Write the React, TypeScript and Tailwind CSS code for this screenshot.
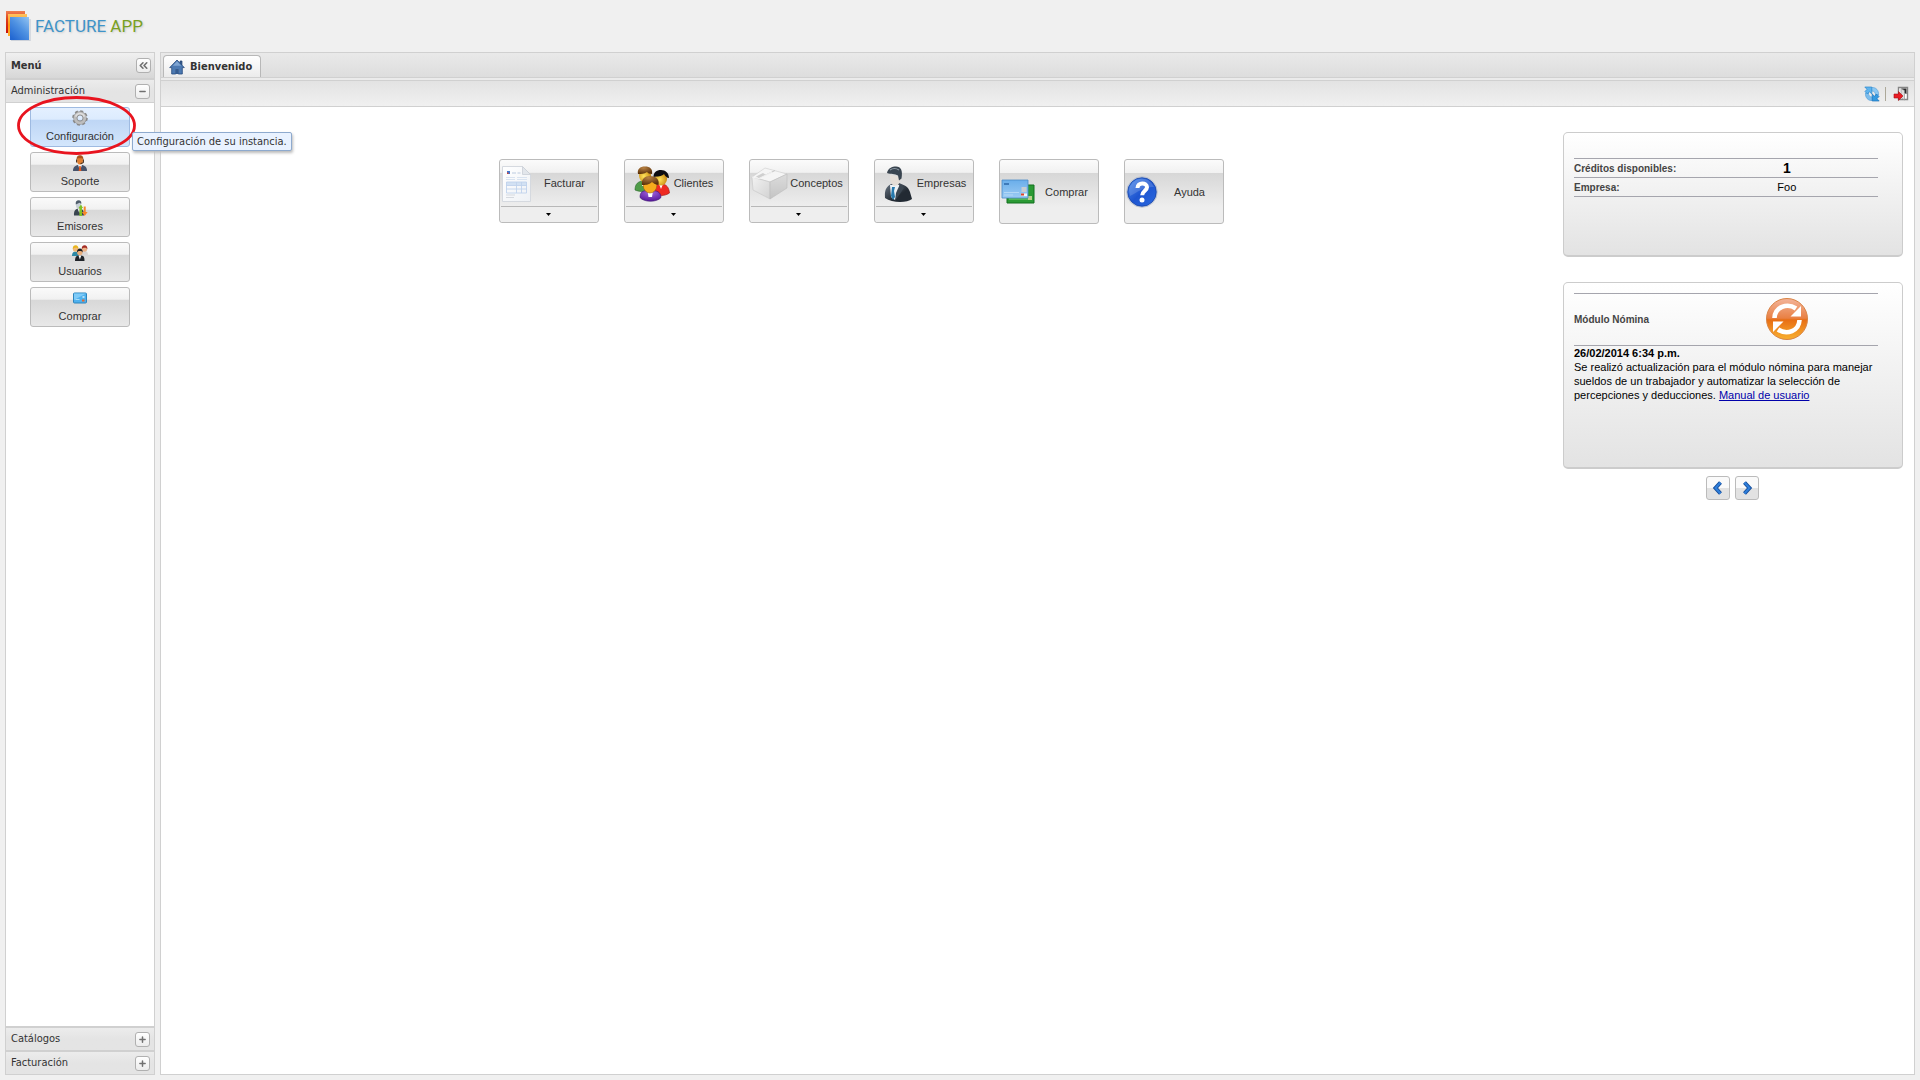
import { useState } from "react";
import type { ReactNode } from "react";
import { ChevronsLeft, Minus, Plus } from "lucide-react";

function LogoIcon() {
  return (
    <svg viewBox="0 0 26 30" className="h-[30px] w-[26px]">
      <defs>
        <linearGradient id="logoRed" x1="0" y1="0" x2="0" y2="1">
          <stop offset="0" stopColor="#f08050" />
          <stop offset=".4" stopColor="#dc3c18" />
          <stop offset="1" stopColor="#c8100c" />
        </linearGradient>
        <linearGradient id="logoYellow" x1="0" y1="0" x2="0" y2="1">
          <stop offset="0" stopColor="#ffc460" />
          <stop offset=".5" stopColor="#ff9a10" />
          <stop offset="1" stopColor="#ffb030" />
        </linearGradient>
        <linearGradient id="logoBlue" x1="1" y1="0" x2=".2" y2="1">
          <stop offset="0" stopColor="#93c4f2" />
          <stop offset=".5" stopColor="#4f92e2" />
          <stop offset="1" stopColor="#2368d2" />
        </linearGradient>
      </defs>
      <path d="M6 29.500h19V8" fill="none" stroke="#cdd2da" strokeWidth="1.500" />
      <path d="M1 0h19v22H1z" fill="url(#logoRed)" />
      <path d="M3 3h19v22H3z" fill="url(#logoYellow)" />
      <path d="M5 6h19v23H5z" fill="url(#logoBlue)" />
    </svg>
  );
}

function HomeIcon() {
  return (
    <svg viewBox="0 0 16 16" className="size-4">
      <path d="M11 2h2v4l-2-2z" fill="#3a5f92" stroke="#23446f" strokeWidth=".7" />
      <path d="M8 1 .7 8.6h2V15h4v-4.5h2.6V15h4V8.6h2z" fill="#4d7ab2" stroke="#24497c" strokeWidth=".8" />
      <path d="M8 2.3 3.8 6.7h8.4z" fill="#7fa5d2" />
      <path d="M7 10.8h2V15H7z" fill="#335c93" />
    </svg>
  );
}

function GearIcon() {
  return (
    <svg viewBox="0 0 16 16" className="size-4">
      <circle cx="8" cy="8" r="6.8" fill="none" stroke="#8a8a8a" strokeWidth="2" strokeDasharray="3 2.34" />
      <circle cx="8" cy="8" r="4.600" fill="none" stroke="#8c8c8c" strokeWidth="4.200" />
      <circle cx="8" cy="8" r="4.800" fill="none" stroke="#bdbdbd" strokeWidth="2.800" />
      <path d="M3.600 6.600a4.700 4.700 0 0 1 8.800 0" fill="none" stroke="#dedede" strokeWidth="1.600" />
    </svg>
  );
}

function SupportIcon() {
  return (
    <svg viewBox="0 0 16 16" className="size-4">
      <path d="M1 16c0-4 2-5.3 5-6h4c3 .7 5 2 5 6z" fill="#46536b" />
      <path d="M6 9.800h4L8 16z" fill="#f4f4f4" />
      <path d="M7.300 11h1.400l.6 5H6.700z" fill="#e2571c" />
      <ellipse cx="8" cy="5.600" rx="3" ry="4" fill="#e07f30" />
      <path d="M4.600 5C4.300 1.300 6 .2 8 .2s3.700 1.100 3.400 4.800L10 3.300H6z" fill="#a8541c" />
      <path d="M4.600 4.500v3M11.400 4.500v3.200L8.500 8.600" fill="none" stroke="#3a2414" strokeWidth="1" />
    </svg>
  );
}

function IssuerIcon() {
  return (
    <svg viewBox="0 0 16 16" className="size-4">
      <path d="M2 15.500c-.4-5 1.500-6.300 4-7h2c3 .7 4 2 4 7z" fill="#39444f" />
      <path d="M5.500 8.500h3L7.300 13z" fill="#f2f2f2" />
      <ellipse cx="6.500" cy="5" rx="2.600" ry="3.500" fill="#c7d0d6" />
      <path d="M3.800 4.500C3.300 1.500 4.700.3 6.600.3S9.700 1.500 9.300 4L7.600 2.800z" fill="#4f5d6b" />
      <path d="M9 4.500 11 8h-1v8H7.400V8H6.500z" fill="#7ec225" />
      <path d="M11.700 6.500h2V12h1.900l-2.900 4-2.800-4h1.800z" fill="#f7872a" />
    </svg>
  );
}

function UsersIcon() {
  return (
    <svg viewBox="0 0 16 16" className="size-4">
      <path d="M0 11c0-3 1-4.500 3.500-4.500S7 8 7 11z" fill="#2d89a5" />
      <path d="M9 10c0-3 1-4 3.500-4S16 7 16 11z" fill="#d9d5d5" />
      <circle cx="3.600" cy="4" r="2.800" fill="#f0b878" />
      <path d="M.8 4C.6 1.300 2 .3 3.700.3S6.500 1.500 6.400 4L5 2.800H2.500z" fill="#e8b51c" />
      <circle cx="12.500" cy="4" r="2.700" fill="#edb388" />
      <path d="M9.700 4c0-2.700 1.300-3.700 3-3.700s2.800 1.200 2.700 4L14 2.800h-2.500z" fill="#a32a22" />
      <path d="M3 16c0-4.500 1.500-5.500 5-5.500s4.500 1 4.500 5.500z" fill="#20242a" />
      <path d="M6.500 10.500h2.800l-1.400 4z" fill="#fff" />
      <circle cx="7.800" cy="7.500" r="2.700" fill="#e9ad7a" />
      <path d="M5 7.500c0-3 1.200-4 2.900-4s2.900 1 2.800 4L9.200 6H6.500z" fill="#1c1c1e" />
    </svg>
  );
}

function CardIcon() {
  return (
    <svg viewBox="0 0 16 16" className="size-4">
      <rect x="1.500" y="3" width="13" height="10" rx="1" fill="#4fb1ee" stroke="#2d84bd" />
      <path d="M2 3.500h12L2 10z" fill="#7fcbf8" />
      <path d="M3.500 9.500h4" stroke="#a8dcf8" />
      <path d="M10.500 6h2v2h-2z" fill="#b5dff5" />
      <path d="M10 9.500h2.500v2H10z" fill="#e8662c" />
    </svg>
  );
}

function InvoiceIcon() {
  return (
    <svg viewBox="0 0 32 36" className="h-9 w-8">
      <defs>
        <linearGradient id="paper" x1="0" y1="0" x2="1" y2="1">
          <stop offset="0" stopColor="#ffffff" />
          <stop offset="1" stopColor="#eef1f5" />
        </linearGradient>
      </defs>
      <path d="M1.500 .500h20l8 8v27h-28z" fill="url(#paper)" stroke="#d5d9df" />
      <path d="M21.500 .500v8h8z" fill="#e2e6eb" stroke="#c9ced5" strokeWidth=".8" />
      <path d="M6 5h3v3H6z" fill="#3f76d1" />
      <path d="M6 6.500h1.500V8H6z" fill="#d64635" />
      <path d="M11 7h4m1.500 0h3" stroke="#bccbe0" />
      <path d="M5 11.500h9M5 13.500h9M16 11.500h10M16 13.500h10" stroke="#d9e3f0" />
      <path d="M5 16h21v3.500H5z" fill="#d2e1f3" />
      <path d="M5.500 16v11h20V16zM5 19.500h21M5 23h21M15.500 16v11M20.500 16v11" fill="none" stroke="#bfd3ec" strokeWidth=".9" />
      <path d="M5 29h9M5 31.500h8" stroke="#d5d9df" />
    </svg>
  );
}

function ClientsIcon() {
  return (
    <svg viewBox="0 0 36 36" className="size-9">
      <defs>
        <radialGradient id="faceLight" cx=".4" cy=".55" r=".6">
          <stop offset="0" stopColor="#ffe45c" />
          <stop offset="1" stopColor="#c98a12" />
        </radialGradient>
        <radialGradient id="hair" cx=".4" cy=".2" r=".8">
          <stop offset="0" stopColor="#b98243" />
          <stop offset="1" stopColor="#5a300a" />
        </radialGradient>
        <radialGradient id="purple" cx=".5" cy=".2" r=".8">
          <stop offset="0" stopColor="#a265e0" />
          <stop offset="1" stopColor="#56179a" />
        </radialGradient>
      </defs>
      <path d="M1 24c0-6 3-9 9-9s8 3 8 9c-4 2-13 2-17 0z" fill="#4f9c48" stroke="#28642a" strokeWidth=".6" />
      <path d="M18 28c0-7 3-10 9-10s8 4 8.500 9c-4 3-13 4-17.500 1z" fill="#ef2a23" stroke="#a01513" strokeWidth=".6" />
      <path d="M8 15h5v5H8zM25 18h4l-2 5z" fill="#fff" />
      <ellipse cx="11" cy="9.500" rx="6" ry="7" fill="url(#faceLight)" />
      <path d="M4 8C3 3 6 .5 11 .5S19 3 18 8c-3 0-4-1-5-2-3 2-6 2-9 2z" fill="url(#hair)" />
      <ellipse cx="27" cy="13" rx="6" ry="6.500" fill="url(#faceLight)" />
      <path d="M19.500 11c0-4.500 3-7 7.500-7s8 3 8 8c-2 0-4-2-5-4-3 3-6 2-10.500 3z" fill="#0d0d12" />
      <path d="M6 31.500c0-7 4-7 10.500-7s10 1 10.500 7c-4 5-17 5-21 0z" fill="url(#purple)" stroke="#3d1070" strokeWidth=".6" />
      <path d="M13.500 25h5.500l-1 6h-3.500z" fill="#fff" />
      <ellipse cx="16" cy="19.500" rx="6.800" ry="7.500" fill="#f5ab1c" stroke="#9c6210" strokeWidth=".6" />
      <path d="M8 19C7 13 11 10 16 10s10 3 8.500 9c-4-.5-5-2-6.500-3-3 3-7 3-10 3z" fill="url(#hair)" />
    </svg>
  );
}

function BoxIcon() {
  return (
    <svg viewBox="0 0 37 36" className="h-9 w-[37px]">
      <defs>
        <linearGradient id="boxSide" x1="0" y1="0" x2="1" y2="1">
          <stop offset="0" stopColor="#f2f2f2" />
          <stop offset="1" stopColor="#d2d2d2" />
        </linearGradient>
        <linearGradient id="boxFront" x1="0" y1="0" x2="0" y2="1">
          <stop offset="0" stopColor="#dcdcdc" />
          <stop offset="1" stopColor="#c4c4c4" />
        </linearGradient>
      </defs>
      <path d="M1 11 14 2l22 6-17 8z" fill="#f5f5f5" stroke="#cccccc" strokeWidth=".6" />
      <path d="M1 11l18 5v17L2 24z" fill="url(#boxSide)" stroke="#c6c6c6" strokeWidth=".6" />
      <path d="M19 16 36 8v14L19 33z" fill="url(#boxFront)" stroke="#bcbcbc" strokeWidth=".6" />
      <path d="M7.500 12.500 24 4.500" stroke="#c6c6c6" strokeWidth="1" />
      <path d="M5 10.500 12 7l3 2-7 3.500z" fill="#cfcfcf" />
      <path d="M1 11l7 1.500L21 6" fill="none" stroke="#ffffff" strokeWidth=".8" />
    </svg>
  );
}

function CompanyIcon() {
  return (
    <svg viewBox="0 0 28 36" className="h-9 w-7">
      <defs>
        <linearGradient id="suit" x1="0" y1="0" x2="1" y2="1">
          <stop offset="0" stopColor="#6c7886" />
          <stop offset=".6" stopColor="#222a33" />
        </linearGradient>
      </defs>
      <path d="M1 32c-.5-8 1-11 6-14l8-1c5 2 9 3 11 9l2 7c-5 4-20 4-27-1z" fill="url(#suit)" />
      <path d="M6 19h9l2 3-6 12-4-3z" fill="#eef2f5" />
      <path d="M8 21h3l-1 4 1 6-2 3-2-4z" fill="#2779ad" />
      <path d="M16 18l4 4-9 13 1-8z" fill="#3b4651" />
      <path d="M6 9c0 7 1.500 9 4 11l4-1c1-2 3-4 3-8z" fill="#e5ded7" />
      <path d="M3 7c1-5 5-6.500 9-6.500 5 0 7 4 5.500 12l-2.500 2-1-5c-3-2-7-1-11-2.500z" fill="#39444f" />
      <path d="M6 4c3-2 6-2 9 0" fill="none" stroke="#8d9aa6" strokeWidth="1.200" />
    </svg>
  );
}

function CreditCardsIcon() {
  return (
    <svg viewBox="0 0 34 26" className="h-[26px] w-[34px]">
      <defs>
        <linearGradient id="cardBlue" x1="0" y1="0" x2="0" y2="1">
          <stop offset="0" stopColor="#6aaeea" />
          <stop offset="1" stopColor="#9ccbf4" />
        </linearGradient>
      </defs>
      <path d="M6 6h27v18H6z" fill="#2a9a34" stroke="#13701e" />
      <path d="M8 20h20" stroke="#7dd27b" />
      <path d="M27 17h4v4h-4z" fill="#b8cf8a" />
      <path d="M1 1h26v18H1z" fill="url(#cardBlue)" stroke="#4a8cc8" strokeWidth=".8" />
      <path d="M3 5h5" stroke="#2d67a8" strokeWidth="1.500" />
      <path d="M3 13.500h15M3 16h9" stroke="#b4d8f6" />
      <path d="M20.500 8h5v5h-5z" fill="#c6cdd3" />
      <path d="M20 14.500h6v2.500h-6z" fill="#f4f4f4" />
      <path d="M20 14.500h3v2h-3z" fill="#d8442c" />
    </svg>
  );
}

function HelpIcon() {
  return (
    <svg viewBox="0 0 32 32" className="size-8">
      <defs>
        <linearGradient id="help" x1="0" y1="0" x2="1" y2="1">
          <stop offset="0" stopColor="#4d8bea" />
          <stop offset=".5" stopColor="#1e55d0" />
          <stop offset="1" stopColor="#2c6ae0" />
        </linearGradient>
      </defs>
      <circle cx="16" cy="16" r="15.300" fill="#e8ecf4" stroke="#a9b2c2" strokeWidth=".7" />
      <circle cx="16" cy="16" r="14.300" fill="url(#help)" stroke="#1743a5" strokeWidth=".8" />
      <path d="M3 14a13 13 0 0 1 25-3c-8-1-17 5-24 9z" fill="#fff" opacity=".16" />
      <path d="M11.500 12c0-6 9.500-6 9.500-.8 0 3.300-4.800 3.800-4.800 8" fill="none" stroke="#fff" strokeWidth="4" />
      <circle cx="16" cy="24" r="2.500" fill="#fff" />
    </svg>
  );
}

function RefreshIcon() {
  return (
    <svg viewBox="0 0 16 16" className="size-4">
      <path d="M7.500 1.500c4.500-.5 7.500 3 7 7.500l-3 1c.5-3-1-5-4-5z" fill="#8cc8f2" stroke="#4c9bd8" strokeWidth=".6" />
      <path d="M8.500 14.500C4 15 1 11.500 1.500 7l3-1c-.5 3 1 5 4 5z" fill="#7dbdec" stroke="#4c9bd8" strokeWidth=".6" />
      <path d="M.8 1h7v7L5.500 5.700 3.500 8 1 5.500 3 3.300z" fill="#5fb4ee" stroke="#2b86cc" strokeWidth=".7" />
      <path d="M15.200 15h-7V8l2.300 2.300 2-2.300L15 10.500l-2 2.200z" fill="#359ae0" stroke="#1c73ba" strokeWidth=".7" />
    </svg>
  );
}

function ExitIcon() {
  return (
    <svg viewBox="0 0 16 16" className="size-4">
      <path d="M5.500 1.500h9v12h-9z" fill="#fff" stroke="#858585" strokeWidth="1.400" />
      <path d="M8.500 2.500h5V8l-5-2z" fill="#2a2a2a" />
      <path d="M8 2.500l3.500 2V14L8 11.500z" fill="#dcdcdc" stroke="#888" strokeWidth=".6" />
      <path d="M1 8h4.500V5.500L10 10l-4.500 4.500V12H1z" fill="#ea1c24" stroke="#a80f14" strokeWidth=".6" />
    </svg>
  );
}

function UpdateIcon() {
  return (
    <svg viewBox="0 0 44 44" className="size-11">
      <defs>
        <linearGradient id="orange" x1="0" y1="0" x2="0" y2="1">
          <stop offset="0" stopColor="#f3b49a" />
          <stop offset=".48" stopColor="#e98043" />
          <stop offset=".52" stopColor="#e86e14" />
          <stop offset="1" stopColor="#f8b030" />
        </linearGradient>
      </defs>
      <circle cx="22" cy="22" r="20.500" fill="url(#orange)" stroke="#d98344" />
      <path d="M9.500 21C10 10 22 5.500 31 11.500" fill="none" stroke="#fff" strokeWidth="4.600" />
      <path d="M36 9v10.500H25.500z" fill="#fff" />
      <path d="M34.500 23C34 34 22 38.500 13 32.500" fill="none" stroke="#fff" strokeWidth="4.600" />
      <path d="M8 35V24.500h10.500z" fill="#fff" />
    </svg>
  );
}

function ArrowIcon({ d }: { d: string }) {
  return (
    <svg viewBox="0 0 16 16" className="size-4">
      <path d={d} fill="none" stroke="#174f9c" strokeWidth="4" />
      <path d={d} fill="none" stroke="#2f7fdb" strokeWidth="2" />
    </svg>
  );
}

const MENU = [
  { label: "Configuración", icon: <GearIcon />, hint: "Configuración de su instancia." },
  { label: "Soporte", icon: <SupportIcon /> },
  { label: "Emisores", icon: <IssuerIcon /> },
  { label: "Usuarios", icon: <UsersIcon /> },
  { label: "Comprar", icon: <CardIcon /> },
];

const ACTIONS = [
  { label: "Facturar", icon: <InvoiceIcon />, slot: "w-8", split: true },
  { label: "Clientes", icon: <ClientsIcon />, slot: "ml-2 w-8", split: true },
  { label: "Conceptos", icon: <BoxIcon />, slot: "w-9", split: true },
  { label: "Empresas", icon: <CompanyIcon />, slot: "w-9 pl-2", split: true },
  { label: "Comprar", icon: <CreditCardsIcon />, slot: "w-9" },
  { label: "Ayuda", icon: <HelpIcon />, slot: "w-8" },
];

function ToolButton({ label, children }: { label: string; children: ReactNode }) {
  return (
    <button
      type="button"
      aria-label={label}
      className="flex size-[15px] items-center justify-center rounded-[3px] border border-[#b0b0b0] bg-gradient-to-b from-white to-[#ececec] text-[#707070]"
    >
      {children}
    </button>
  );
}

function SectionHeader({ title, open }: { title: string; open?: boolean }) {
  return (
    <div className="flex h-6 items-center justify-between border-t-2 border-[#d0d0d0] bg-gradient-to-b from-[#ececec] via-[#e4e4e4] to-[#e4e4e4] pr-1 pl-[5px]">
      <span className="pt-px">{title}</span>
      <ToolButton label={title}>
        {open ? <Minus size={9} strokeWidth={4} /> : <Plus size={9} strokeWidth={4} />}
      </ToolButton>
    </div>
  );
}

function MenuButton({ item, active }: { item: (typeof MENU)[number]; active: boolean }) {
  return (
    <div className="relative">
      <button
        type="button"
        className={`flex h-10 w-[100px] flex-col items-center rounded-[3px] border p-px pt-[2px] font-['Liberation_Sans',sans-serif] ${
          active
            ? "border-[#9ebae1] bg-[linear-gradient(#e4f0ff_0%,#dcebfe_30%,#bed6f5_31%,#d3e6fc_100%)]"
            : "border-[#bbbbbb] bg-[linear-gradient(#fafafa_0%,#f1f1f1_30%,#d8d8d8_31%,#e8e8e8_100%)]"
        }`}
      >
        {item.icon}
        <span className="mt-[2px] leading-4">{item.label}</span>
      </button>
      {active && (
        <>
          <svg viewBox="0 0 120 60" className="pointer-events-none absolute -top-3 -left-[14px] z-10 h-[60px] w-[120px]">
            <ellipse cx="60.500" cy="30.500" rx="58" ry="28" fill="none" stroke="#e8141f" strokeWidth="2.800" />
          </svg>
          <div
            role="tooltip"
            className="absolute top-[25px] left-[102px] z-20 rounded-[2px] border border-[#8eaace] bg-[#e9f2ff] px-1 pt-px leading-4 whitespace-nowrap shadow-[1px_2px_3px_#bbbbbb]"
          >
            {item.hint}
          </div>
        </>
      )}
    </div>
  );
}

function ActionButton({ action }: { action: (typeof ACTIONS)[number] }) {
  return (
    <button
      type="button"
      className={`flex w-[100px] flex-col rounded-[3px] border border-[#bbbbbb] bg-[linear-gradient(#fbfbfb_0%,#f1f1f1_20%,#d7d7d7_21%,#eeeeee_75%)] px-px ${
        action.split ? "h-16" : "h-[65px]"
      }`}
    >
      <span className="flex w-full flex-1 items-center pt-px">
        <span className={`shrink-0 ${action.slot}`}>{action.icon}</span>
        <span className="flex-1 text-center">{action.label}</span>
      </span>
      {action.split && (
        <span className="flex h-4 w-full items-center justify-center border-t border-[#b8b8b8] bg-[#eeeeee]">
          <svg viewBox="0 0 5 3" className="h-[3px] w-[5px]">
            <path d="M0 0h5L2.500 3z" fill="#000" />
          </svg>
        </span>
      )}
    </button>
  );
}

function Card({ className, children }: { className: string; children: ReactNode }) {
  return (
    <section
      className={`rounded-[5px] border border-b-2 border-[#cccccc] bg-gradient-to-b from-white to-[#e3e3e3] pr-6 pl-[10px] ${className}`}
    >
      {children}
    </section>
  );
}

export default function App() {
  const [current] = useState("Configuración");

  return (
    <div className="flex min-h-screen flex-col bg-[#f0f0f0] px-[5px] pb-[5px] font-['DejaVu_Sans_Condensed','DejaVu_Sans',sans-serif] text-[11px] text-[#333333]">
      <header className="flex h-[52px] items-center gap-1">
        <LogoIcon />
        <h1 className="font-[Roboto,'Liberation_Sans',sans-serif] text-[17px] leading-6 text-[#3e93c9] [text-shadow:1px_1px_2px_#cccccc]">
          FACTURE <span className="text-[#79a022]">APP</span>
        </h1>
      </header>

      <div className="flex flex-1 gap-[5px]">
        <aside className="flex w-[150px] shrink-0 flex-col border border-[#d0d0d0] bg-white">
          <div className="flex h-[25px] items-center justify-between bg-gradient-to-b from-[#f0f0f0] to-[#d7d7d7] pr-[3px] pl-[5px] font-bold">
            <h2 className="pt-px">Menú</h2>
            <ToolButton label="Contraer menú">
              <ChevronsLeft size={13} strokeWidth={3} />
            </ToolButton>
          </div>
          <SectionHeader title="Administración" open />
          <nav className="flex flex-1 flex-col items-center gap-[5px] border-t border-[#d0d0d0] pt-1">
            {MENU.map((item) => (
              <MenuButton key={item.label} item={item} active={item.label === current} />
            ))}
          </nav>
          <SectionHeader title="Catálogos" />
          <SectionHeader title="Facturación" />
        </aside>

        <main className="flex min-w-0 flex-1 flex-col border border-[#d0d0d0] bg-white">
          <div className="flex h-6 items-end bg-gradient-to-b from-[#e9e9e9] to-[#dddddd] px-[2px]">
            <button
              type="button"
              className="flex h-[22px] items-center gap-[5px] rounded-t-[4px] border border-b-0 border-[#b8b8b8] bg-gradient-to-b from-white to-[#ebebeb] pr-2 pl-[5px] font-bold"
            >
              <HomeIcon />
              <span className="pt-px">Bienvenido</span>
            </button>
          </div>
          <div className="h-1 border-y border-[#d0d0d0] bg-[#ebebeb]" />
          <div className="flex h-[26px] items-center justify-end gap-[5px] border-b border-[#d0d0d0] bg-gradient-to-b from-[#e3e3e3] to-[#f0f0f0] pr-[5px]">
            <button type="button" aria-label="Actualizar">
              <RefreshIcon />
            </button>
            <span className="h-[14px] w-px bg-[#aca899]" />
            <button type="button" aria-label="Salir" className="pl-[2px]">
              <ExitIcon />
            </button>
          </div>

          <div className="flex flex-1 pt-[25px] font-['Liberation_Sans',sans-serif]">
            <div className="flex flex-1 items-start justify-center gap-[25px] pt-[27px] pr-[2px]">
              {ACTIONS.map((action) => (
                <ActionButton key={action.label} action={action} />
              ))}
            </div>

            <div className="flex w-[351px] shrink-0 flex-col pr-[11px]">
              <Card className="h-[125px] pt-[25px]">
                <table className="w-full border-collapse">
                  <tbody>
                    <tr className="h-[19px] border-y border-[#a5a5ad]">
                      <th scope="row" className="w-2/5 text-left text-[10px] text-[#444444]">Créditos disponibles:</th>
                      <td className="text-center text-sm leading-4 font-bold text-black">1</td>
                    </tr>
                    <tr className="h-[19px] border-y border-[#a5a5ad]">
                      <th scope="row" className="text-left text-[10px] text-[#444444]">Empresa:</th>
                      <td className="text-center leading-4 text-black">Foo</td>
                    </tr>
                  </tbody>
                </table>
              </Card>

              <Card className="mt-[25px] h-[187px] pt-[10px]">
                <div className="flex h-[53px] items-center border-y border-[#a5a5ad]">
                  <h3 className="w-2/5 text-[10px] font-bold text-[#444444]">Módulo Nómina</h3>
                  <span className="flex flex-1 justify-center pb-[2px]">
                    <UpdateIcon />
                  </span>
                </div>
                <div className="leading-[14px] text-black">
                  <p className="font-bold">26/02/2014 6:34 p.m.</p>
                  <p>
                    Se realizó actualización para el módulo nómina para manejar sueldos de un trabajador y
                    automatizar la selección de percepciones y deducciones.{" "}
                    <a href="#manual" className="text-[#0000aa] underline">
                      Manual de usuario
                    </a>
                  </p>
                </div>
              </Card>

              <div className="mt-[7px] flex justify-center gap-[5px] pr-[2px]">
                <button
                  type="button"
                  aria-label="Anterior"
                  className="flex size-6 items-center justify-center rounded-[3px] border border-[#bbbbbb] bg-[linear-gradient(#fafafa_50%,#e2e2e2_51%)]"
                >
                  <ArrowIcon d="M10.500 2.500 5.500 8l5 5.500" />
                </button>
                <button
                  type="button"
                  aria-label="Siguiente"
                  className="flex size-6 items-center justify-center rounded-[3px] border border-[#bbbbbb] bg-[linear-gradient(#fafafa_50%,#e2e2e2_51%)]"
                >
                  <ArrowIcon d="M5.500 2.500 10.500 8l-5 5.500" />
                </button>
              </div>
            </div>
          </div>
        </main>
      </div>
    </div>
  );
}
